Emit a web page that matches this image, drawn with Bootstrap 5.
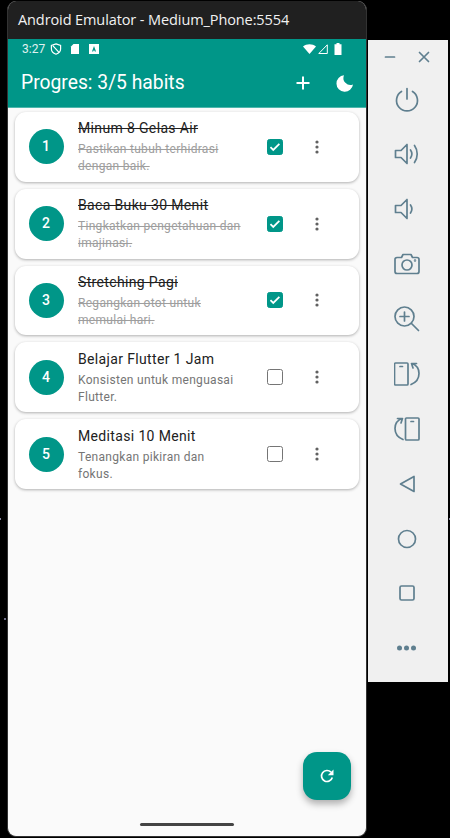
<!DOCTYPE html>
<html lang="en">
<head>
    <meta charset="UTF-8">
    <title>Android Emulator - Medium_Phone:5554</title>
    <link href="https://cdn.jsdelivr.net/npm/bootstrap@5.3.3/dist/css/bootstrap.min.css" rel="stylesheet">
    <style>
        html, body { height: 100%; }
        body {
            background-color: #000;
            background-image:
                radial-gradient(circle, #8a8aa0 0 1px, transparent 1px),
                radial-gradient(circle, #70708a 0 1px, transparent 1px);
            background-size: 450px 838px;
            background-position: 225px 100px, -220px 200px;
            overflow: hidden;
            font-family: Roboto, sans-serif;
        }
        .emu-stage { padding: 1px 0 0 7px; width: 450px; height: 838px; }
        .emu-window {
            width: 360px;
            height: 836px;
            border: 1px solid #333;
            border-top: 0;
            border-radius: 9px;
            overflow: hidden;
            background: #fafafa;
            position: relative;
            flex: none;
        }
        .emu-title {
            height: 38px;
            background: #202020;
            color: #f2f2f2;
            font: 14.5px/38px "Open Sans", sans-serif;
            padding-left: 10px;
            letter-spacing: -.1px;
        }
        .status-row { height: 20px; padding: 0 24px 0 14px; font-size: 12px; color: #e0f2f1; }
        .status-shield { margin-left: 5px; }
        .status-sd { margin-left: 8px; }
        .status-app { margin-left: 9px; }
        .status-signal { margin-left: 2px; }
        .status-battery { margin-left: 6px; }
        .app-header { background: #009688; height: 69px; color: #fff; border-bottom: 1px solid #4db6ac; }
        .app-bar { height: 48px; padding: 0 11px 0 13px; }
        .app-bar-title { font-size: 19.3px; }
        .header-actions { gap: 24px; }
        .habit-list { padding: 4px 7px 0 7px; gap: 7px; }
        .habit-card {
            height: 69.8px;
            border: 0;
            border-radius: 11px;
            background: #fff;
            box-shadow: 0 1px 3px rgba(0,0,0,.3);
            padding-left: 13.5px;
        }
        .habit-num {
            width: 35px;
            height: 35px;
            flex: none;
            border-radius: 50%;
            background: #009688;
            color: #fff;
            font-size: 14px;
            font-weight: 500;
        }
        .habit-text { width: 175px; margin-left: 14.5px; flex: none; }
        .habit-name { font-size: 14px; letter-spacing: .35px; line-height: 18px; color: #212121; margin-top: 1px; margin-bottom: 4px; }
        .habit-desc { font-size: 12px; letter-spacing: .3px; line-height: 17px; color: #757575; }
        .is-done .habit-desc { color: #9e9e9e; }
        .is-done .habit-name, .is-done .habit-desc { text-decoration: line-through; }
        .habit-check.form-check-input {
            width: 16px;
            height: 16px;
            margin: 0 0 0 14px;
            border-radius: 2.5px;
            border: 1px solid #757575;
            flex: none;
        }
        .habit-check.form-check-input:checked {
            background-color: #009688;
            border-color: #009688;
            background-image: url("data:image/svg+xml,%3csvg xmlns='http://www.w3.org/2000/svg' viewBox='0 0 16 16'%3e%3cpath fill='none' stroke='%23fff' stroke-width='2' d='M2.800 8.200l3.200 3.200 7-7'/%3e%3c/svg%3e");
        }
        .habit-more { margin-left: 26px; display: block; flex: none; }
        .fab-reset {
            position: absolute;
            left: 295px;
            top: 751px;
            width: 48px;
            height: 48px;
            border-radius: 14px;
            background: #009688;
            border: 0;
            padding: 0;
            box-shadow: 0 4px 7px rgba(0,0,0,.3);
        }
        .gesture-pill {
            position: absolute;
            left: 132px;
            top: 822px;
            width: 94px;
            height: 3px;
            border-radius: 2px;
            background: #444;
        }
        .emu-tools {
            width: 80px;
            height: 642px;
            margin: 39px 0 0 1px;
            background: #f0f0f0;
            flex: none;
        }
        .tools-top { height: 32px; padding: 1px 18px 0 16px; }
        .tool-slot { height: 54.9px; padding-right: 2px; }
        .tool-icon { fill: none; stroke: #5f7f8f; stroke-width: 1.7; stroke-linecap: round; stroke-linejoin: round; }
    </style>
</head>
<body class="m-0">
<div class="emu-stage d-flex">
    <!-- Emulator window -->
    <div class="emu-window d-flex flex-column">
        <div class="emu-title">Android Emulator - Medium_Phone:5554</div>
        <div class="app-header">
            <div class="status-row d-flex align-items-center">
                <span>3:27</span>
                <svg class="status-shield" width="12" height="12" viewBox="0 0 12 12" fill="none" stroke="#fff" stroke-width="1.2"><path d="M6 .9 10.600 2.500V6c0 2.600-2 4.300-4.600 5.200C3.400 10.300 1.400 8.600 1.400 6V2.500zM3 2.800l6 6.600"/></svg>
                <svg class="status-sd" width="10" height="12" viewBox="0 0 10 12" fill="#fff"><path d="M3.500 1H9v10H1V3.500z"/></svg>
                <svg class="status-app" width="10" height="10" viewBox="0 0 10 10"><path fill="#fff" fill-rule="evenodd" d="M0 0h10v10H0zM5 2 3 7.500h1.200l.3-1h1l.3 1H7z"/></svg>
                <span class="flex-grow-1"></span>
                <svg width="13" height="10" viewBox="0 0 13 10" fill="#fff"><path d="M0 2.500C3.500-.6 9.500-.6 13 2.500L6.500 10z"/></svg>
                <svg class="status-signal" width="10" height="10" viewBox="0 0 10 10" fill="none" stroke="#fff"><path d="M9.300 .8V9.500H.8z"/></svg>
                <svg class="status-battery" width="8" height="12" viewBox="0 0 8 12" fill="#fff"><path d="M2.500 0h3v1.200H7.500V12H.5V1.200h2z"/></svg>
            </div>
            <div class="app-bar d-flex align-items-center justify-content-between">
                <span class="app-bar-title">Progres: 3/5 habits</span>
                <div class="header-actions d-flex align-items-center">
                    <svg width="16" height="16" viewBox="0 0 16 16" stroke="#fff" stroke-width="2"><path d="M8 1.500v13M1.500 8h13"/></svg>
                    <svg width="20" height="20" viewBox="0 0 20 20" fill="#fff"><path d="M9 2.200A8.300 8.300 0 1 0 18 11.500 7 7 0 0 1 9 2.200z"/></svg>
                </div>
            </div>
        </div>

        <!-- Habit list -->
        <div class="habit-list d-flex flex-column" id="habitList"></div>

        <button class="fab-reset btn d-flex align-items-center justify-content-center" type="button">
            <svg width="16" height="16" viewBox="0 0 16 16" fill="none" stroke="#fff" stroke-width="1.7"><path d="M13.300 9.500A5.500 5.500 0 1 1 12 4.200"/><path fill="#fff" stroke="none" d="M14.500 1.500v5.700H8.800z"/></svg>
        </button>
        <div class="gesture-pill"></div>
    </div>

    <!-- Emulator side toolbar -->
    <div class="emu-tools d-flex flex-column">
        <div class="tools-top d-flex align-items-center justify-content-between">
            <svg width="12" height="12" viewBox="0 0 12 12" class="tool-icon"><path d="M1.500 6h9"/></svg>
            <svg width="12" height="12" viewBox="0 0 12 12" class="tool-icon"><path d="M1.500 1.500l9 9M10.500 1.500l-9 9"/></svg>
        </div>
        <div class="tool-slot d-flex align-items-center justify-content-center">
            <svg width="26" height="26" viewBox="0 0 26 26" class="tool-icon"><path d="M13 2.500V13M7.500 5.500a10.500 10.500 0 1 0 11 0"/></svg>
        </div>
        <div class="tool-slot d-flex align-items-center justify-content-center">
            <svg width="26" height="26" viewBox="0 0 26 26" class="tool-icon"><path d="M1.500 9.500h5.500L13 3.500v19L7 16.500H1.500zM16.500 9c1.800 2.600 1.800 5.400 0 8M20.500 4.500c3.600 5 3.600 12 0 17"/></svg>
        </div>
        <div class="tool-slot d-flex align-items-center justify-content-center">
            <svg width="26" height="26" viewBox="0 0 26 26" class="tool-icon"><path d="M1.500 9.500H7l6-6v19l-6-6H1.500zM16.500 9c1.800 2.600 1.800 5.400 0 8"/></svg>
        </div>
        <div class="tool-slot d-flex align-items-center justify-content-center">
            <svg width="26" height="26" viewBox="0 0 26 26" class="tool-icon"><path d="M1 8.500a2 2 0 0 1 2-2h4.500L9 3.500h8l1.500 3H23a2 2 0 0 1 2 2v12a2 2 0 0 1-2 2H3a2 2 0 0 1-2-2z"/><circle cx="13" cy="14" r="5"/><circle cx="21" cy="9.500" r=".4"/></svg>
        </div>
        <div class="tool-slot d-flex align-items-center justify-content-center">
            <svg width="26" height="26" viewBox="0 0 26 26" class="tool-icon"><circle cx="10.500" cy="10.500" r="9.500"/><path d="M17.500 17.500l7 7M10.500 6v9M6 10.500h9"/></svg>
        </div>
        <div class="tool-slot d-flex align-items-center justify-content-center">
            <svg width="26" height="26" viewBox="0 0 26 26" class="tool-icon"><rect x=".5" y="2" width="13.500" height="22" rx="1"/><path d="M6 5.500H8.500M22.500 2.500h-5l1.500 4.500M17.500 2.500c5 1.500 7.500 5 7.500 10 0 5-3 9-8 11"/></svg>
        </div>
        <div class="tool-slot d-flex align-items-center justify-content-center">
            <svg width="26" height="26" viewBox="0 0 26 26" class="tool-icon"><rect x="11.500" y="2" width="13.500" height="22" rx="1"/><path d="M17 5.500h2.500M3.500 2.500h5l-1.500 4.500M8.500 2.500c-5 1.500-7.500 5-7.500 10 0 5 3 9 8 11"/></svg>
        </div>
        <div class="tool-slot d-flex align-items-center justify-content-center">
            <svg width="26" height="26" viewBox="0 0 26 26" class="tool-icon"><path d="M6.500 13 20 5.500v15z"/></svg>
        </div>
        <div class="tool-slot d-flex align-items-center justify-content-center">
            <svg width="26" height="26" viewBox="0 0 26 26" class="tool-icon"><circle cx="13" cy="13" r="8.500"/></svg>
        </div>
        <div class="tool-slot d-flex align-items-center justify-content-center">
            <svg width="26" height="26" viewBox="0 0 26 26" class="tool-icon"><rect x="6" y="6" width="14" height="14" rx="1.500"/></svg>
        </div>
        <div class="tool-slot d-flex align-items-center justify-content-center">
            <svg width="26" height="26" viewBox="0 0 26 26" fill="#5f7f8f"><circle cx="5.500" cy="13" r="2.500"/><circle cx="12.500" cy="13" r="2.500"/><circle cx="19.500" cy="13" r="2.500"/></svg>
        </div>
    </div>
</div>

<script src="https://cdn.jsdelivr.net/npm/bootstrap@5.3.3/dist/js/bootstrap.bundle.min.js"></script>
<script>
    const habits = [
        { name: "Minum 8 Gelas Air", desc: "Pastikan tubuh terhidrasi dengan baik.", done: true },
        { name: "Baca Buku 30 Menit", desc: "Tingkatkan pengetahuan dan imajinasi.", done: true },
        { name: "Stretching Pagi", desc: "Regangkan otot untuk<br>memulai hari.", done: true },
        { name: "Belajar Flutter 1 Jam", desc: "Konsisten untuk menguasai Flutter.", done: false },
        { name: "Meditasi 10 Menit", desc: "Tenangkan pikiran dan<br>fokus.", done: false }
    ];

    const list = document.getElementById("habitList");
    habits.forEach((habit, i) => {
        const card = document.createElement("div");
        card.className = "habit-card card flex-row align-items-center" + (habit.done ? " is-done" : "");
        card.innerHTML = `
            <div class="habit-num d-flex align-items-center justify-content-center">${i + 1}</div>
            <div class="habit-text">
                <div class="habit-name">${habit.name}</div>
                <div class="habit-desc">${habit.desc}</div>
            </div>
            <input class="habit-check form-check-input" type="checkbox" ${habit.done ? "checked" : ""}>
            <svg class="habit-more" width="16" height="16" viewBox="0 0 16 16" fill="#616161"><circle cx="8" cy="3" r="1.600"/><circle cx="8" cy="8" r="1.600"/><circle cx="8" cy="13" r="1.600"/></svg>
        `;
        list.appendChild(card);
    });
</script>
</body>
</html>
